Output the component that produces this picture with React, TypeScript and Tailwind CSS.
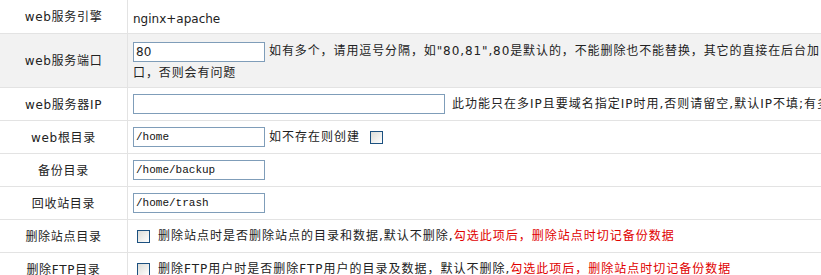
import type { ReactNode } from 'react';

const font = { fontFamily: '"DejaVu Sans", "Noto Sans CJK SC", sans-serif' };

function Row({ label, children, h, gray }: { label: string; children: ReactNode; h: string; gray?: boolean }) {
  return (
    <div className={`flex border-b border-[#e3e3e3] ${h} ${gray ? 'bg-[#f2f2f2]' : 'bg-white'}`}>
      <div className="w-[128px] shrink-0 border-r border-[#e3e3e3] flex items-center justify-center tracking-[0.7px] pt-[1px]">
        {label}
      </div>
      <div className="flex-1 pl-[5px] whitespace-nowrap">{children}</div>
    </div>
  );
}

function TextInput({ value, w, mono }: { value: string; w: string; mono?: boolean }) {
  return (
    <input
      readOnly
      value={value}
      className={`${w} h-[20px] border border-[#7f9db9] bg-white px-[2px] align-middle outline-none tracking-normal ${
        mono ? "font-['Liberation_Mono',monospace] text-[11px] tracking-[-0.6px] text-[#111]" : 'text-[12px] text-[#222]'
      }`}
    />
  );
}

function Check() {
  return (
    <span className="inline-block w-[13px] h-[13px] border border-[#1c5180] bg-gradient-to-br from-[#dcdcd7] to-white align-middle" />
  );
}

export default function App() {
  return (
    <div className="w-[821px] h-[275px] overflow-hidden bg-white text-[12px] text-[#222]" style={font}>
      <div className="w-[1000px]">
        <Row label="web服务引擎" h="h-[34px]">
          <div className="h-full flex items-center pt-[4px]">nginx+apache</div>
        </Row>
        <Row label="web服务端口" h="h-[54px]" gray>
          <div className="pt-[6px] leading-[22px] whitespace-normal w-[740px] tracking-[0.9px]">
            <TextInput value="80" w="w-[132px]" />
            <span className="ml-[4px]">如有多个，请用逗号分隔，如"80,81",80是默认的，不能删除也不能替换，其它的直接在后台加</span>
            <br />
            口，否则会有问题
          </div>
        </Row>
        <Row label="web服务器IP" h="h-[33px]">
          <div className="h-full flex items-center">
            <TextInput value="" w="w-[312px]" />
            <span className="ml-[7px] tracking-[1px]">此功能只在多IP且要域名指定IP时用,否则请留空,默认IP不填;有多个IP时，请用逗号分隔</span>
          </div>
        </Row>
        <Row label="web根目录" h="h-[33px]">
          <div className="h-full flex items-center">
            <TextInput value="/home" w="w-[132px]" mono />
            <span className="ml-[4px] tracking-[1px]">如不存在则创建</span>
            <span className="ml-[10px] flex">
              <Check />
            </span>
          </div>
        </Row>
        <Row label="备份目录" h="h-[33px]">
          <div className="h-full flex items-center">
            <TextInput value="/home/backup" w="w-[132px]" mono />
          </div>
        </Row>
        <Row label="回收站目录" h="h-[33px]">
          <div className="h-full flex items-center">
            <TextInput value="/home/trash" w="w-[132px]" mono />
          </div>
        </Row>
        <Row label="删除站点目录" h="h-[33px]">
          <div className="h-full flex items-center pl-[4px] tracking-[1px]">
            <Check />
            <span className="ml-[8px]">删除站点时是否删除站点的目录和数据,默认不删除,</span>
            <span className="text-[#e00000]">勾选此项后，删除站点时切记备份数据</span>
          </div>
        </Row>
        <Row label="删除FTP目录" h="h-[33px]">
          <div className="h-full flex items-center pl-[4px] tracking-[1px]">
            <Check />
            <span className="ml-[8px]">删除FTP用户时是否删除FTP用户的目录及数据，默认不删除,</span>
            <span className="text-[#e00000]">勾选此项后，删除站点时切记备份数据</span>
          </div>
        </Row>
      </div>
    </div>
  );
}
